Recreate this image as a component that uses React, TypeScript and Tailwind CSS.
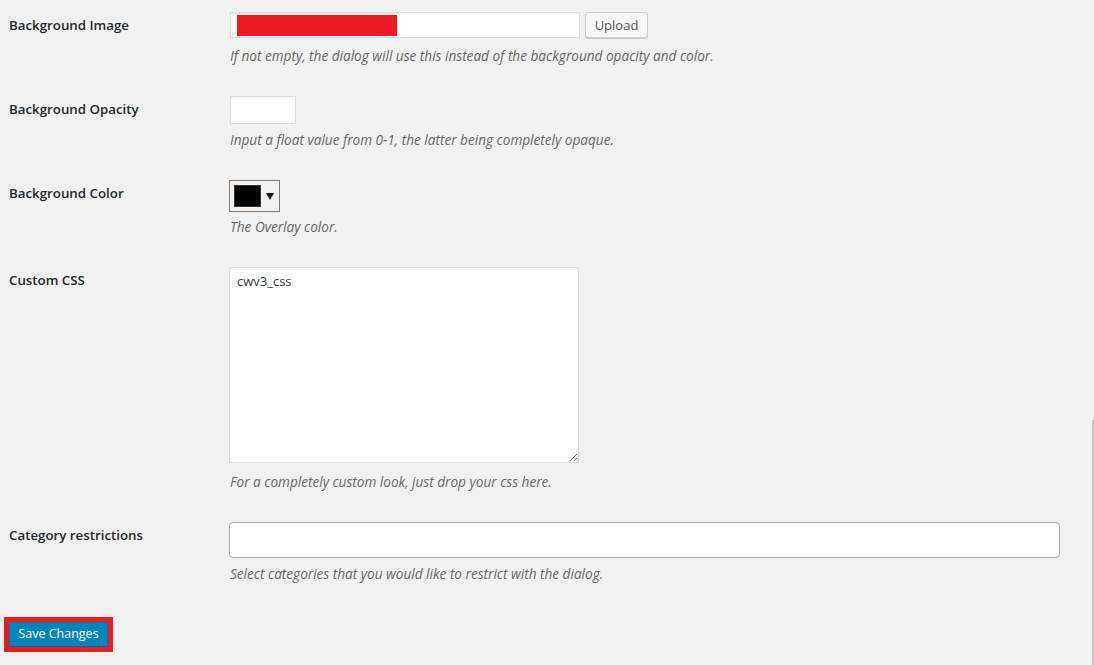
import React from "react";

const font = { fontFamily: '"Open Sans", "Noto Sans", Arial, sans-serif' };

function Label({ children }: { children: React.ReactNode }) {
  return (
    <div className="w-[230px] shrink-0 pl-[9px] pt-[3px] text-[13.3px] leading-5 font-semibold text-[#23282d]">
      {children}
    </div>
  );
}

function Desc({ children, mt }: { children: React.ReactNode; mt: string }) {
  return <p className={`${mt} text-[13.6px] leading-[18px] italic text-[#666]`}>{children}</p>;
}

export default function App() {
  return (
    <div style={font} className="relative min-h-[665px] w-full bg-[#f1f1f1] pt-[12px] overflow-hidden">
      {/* Row 1 */}
      <div className="flex">
        <Label>Background Image</Label>
        <div className="flex flex-col">
          <div className="flex items-center gap-[5px]">
            <div className="w-[350px] h-[26px] bg-white border border-[#ddd] shadow-[inset_0_1px_2px_rgba(0,0,0,0.07)] pl-[6px] pt-[2px]">
              <div className="w-[160px] h-[21px] bg-[#ed1c24]" />
            </div>
            <button className="w-[63px] h-[26px] text-[13px] text-[#555] bg-[#f7f7f7] border border-[#ccc] rounded-[3px] shadow-[0_1px_0_#ccc] leading-none">
              Upload
            </button>
          </div>
          <Desc mt="mt-[9px]">If not empty, the dialog will use this instead of the background opacity and color.</Desc>
        </div>
      </div>

      {/* Row 2 */}
      <div className="flex mt-[31px]">
        <Label>Background Opacity</Label>
        <div className="flex flex-col">
          <div className="w-[66px] h-[28px] bg-white border border-[#ddd] shadow-[inset_0_1px_2px_rgba(0,0,0,0.07)]" />
          <Desc mt="mt-[7px]">Input a float value from 0-1, the latter being completely opaque.</Desc>
        </div>
      </div>

      {/* Row 3 */}
      <div className="flex mt-[31px]">
        <Label>Background Color</Label>
        <div className="flex flex-col -ml-[1px]">
          <div className="w-[51px] h-[32px] border border-[#8b7763] flex items-center pl-[4px] gap-[5px]">
            <div className="w-[27px] h-[22px] bg-black border border-[#333]" />
            <svg width="8" height="7" viewBox="0 0 8 7">
              <polygon points="0,0 8,0 4,7" fill="#111" />
            </svg>
          </div>
          <Desc mt="mt-[6px]">
            <span className="ml-[1px]">The Overlay color.</span>
          </Desc>
        </div>
      </div>

      {/* Row 4 */}
      <div className="flex mt-[31px]">
        <Label>Custom CSS</Label>
        <div className="flex flex-col -ml-[1px]">
          <textarea
            defaultValue="cwv3_css"
            style={font}
            className="w-[350px] h-[196px] bg-white border border-[#ddd] shadow-[inset_0_1px_2px_rgba(0,0,0,0.07)] px-[7px] py-[3px] text-[13px] leading-5 text-[#32373c] outline-none"
          />
          <Desc mt="mt-[10px]">
            <span className="ml-[1px]">For a completely custom look, just drop your css here.</span>
          </Desc>
        </div>
      </div>

      {/* Row 5 */}
      <div className="flex mt-[31px]">
        <Label>Category restrictions</Label>
        <div className="flex flex-col -ml-[1px]">
          <div className="w-[831px] h-[36px] bg-white border border-[#aaa] rounded-[4px]" />
          <Desc mt="mt-[7px]">
            <span className="ml-[1px]">Select categories that you would like to restrict with the dialog.</span>
          </Desc>
        </div>
      </div>

      {/* Save */}
      <div className="mt-[34px] ml-[4px] inline-block border-[5px] border-[#ed1c24]">
        <button className="block w-[99px] h-[25px] bg-[#0085ba] border border-[#0073aa] border-b-[#006799] text-white text-[12.5px] leading-none">
          Save Changes
        </button>
      </div>

      {/* scrollbar edge */}
      <div className="absolute right-0 top-[420px] bottom-0 w-[2px] bg-[#c1c1c1]" />
    </div>
  );
}
